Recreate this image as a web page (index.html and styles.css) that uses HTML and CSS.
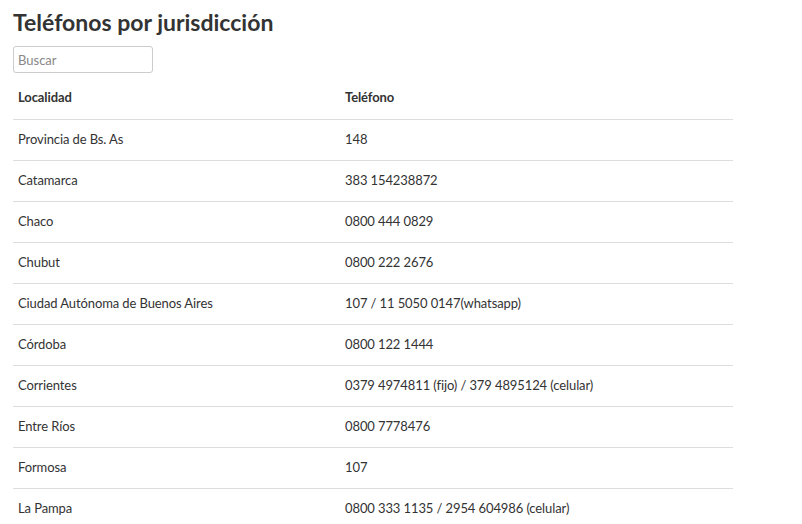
FILE: index.html
```html
<!DOCTYPE html>
<html lang="es">
<head>
<meta charset="utf-8">
<link rel="stylesheet" href="styles.css">
</head>
<body>
<div class="page">
  <h2 class="title">Teléfonos por jurisdicción</h2>
  <input class="search" type="text" placeholder="Buscar">
  <table class="phones">
    <colgroup><col class="col1"><col class="col2"></colgroup>
    <thead>
      <tr><th>Localidad</th><th>Teléfono</th></tr>
    </thead>
    <tbody>
      <tr><td>Provincia de Bs. As</td><td>148</td></tr>
      <tr><td>Catamarca</td><td>383 154238872</td></tr>
      <tr><td>Chaco</td><td>0800 444 0829</td></tr>
      <tr><td>Chubut</td><td>0800 222 2676</td></tr>
      <tr><td>Ciudad Autónoma de Buenos Aires</td><td>107 / 11 5050 0147(whatsapp)</td></tr>
      <tr><td>Córdoba</td><td>0800 122 1444</td></tr>
      <tr><td>Corrientes</td><td>0379 4974811 (fijo) / 379 4895124 (celular)</td></tr>
      <tr><td>Entre Ríos</td><td>0800 7778476</td></tr>
      <tr><td>Formosa</td><td>107</td></tr>
      <tr><td>La Pampa</td><td>0800 333 1135 / 2954 604986 (celular)</td></tr>
    </tbody>
  </table>
</div>
</body>
</html>
```
FILE: styles.css
```css
html, body {
  margin: 0;
  padding: 0;
  background: #fff;
}
body {
  font-family: Lato, "Open Sans", sans-serif;
  color: #333;
}
.page {
  padding: 8px 13px;
}
.title {
  margin: 0;
  font-size: 23px;
  line-height: 28px;
  font-weight: 700;
  color: #333;
}
.search {
  display: block;
  margin-top: 10px;
  width: 140px;
  height: 27px;
  box-sizing: border-box;
  border: 1px solid #ccc;
  border-radius: 3px;
  padding: 0 4px;
  font-family: inherit;
  font-size: 13px;
  color: #333;
}
.search::placeholder {
  color: #888;
}
.phones {
  width: 720px;
  table-layout: fixed;
  border-collapse: collapse;
  margin-top: 3px;
  font-size: 13px;
  letter-spacing: -0.1px;
}
.col1 {
  width: 327px;
}
.col2 {
  width: 393px;
}
.phones th, .phones td {
  text-align: left;
  padding: 0 5px;
  height: 41px;
  box-sizing: border-box;
  vertical-align: middle;
}
.phones th {
  font-weight: 700;
  height: 43px;
  border-bottom: 1px solid #ddd;
}
.phones td {
  padding-bottom: 2px;
  border-bottom: 1px solid #ddd;
}
```
